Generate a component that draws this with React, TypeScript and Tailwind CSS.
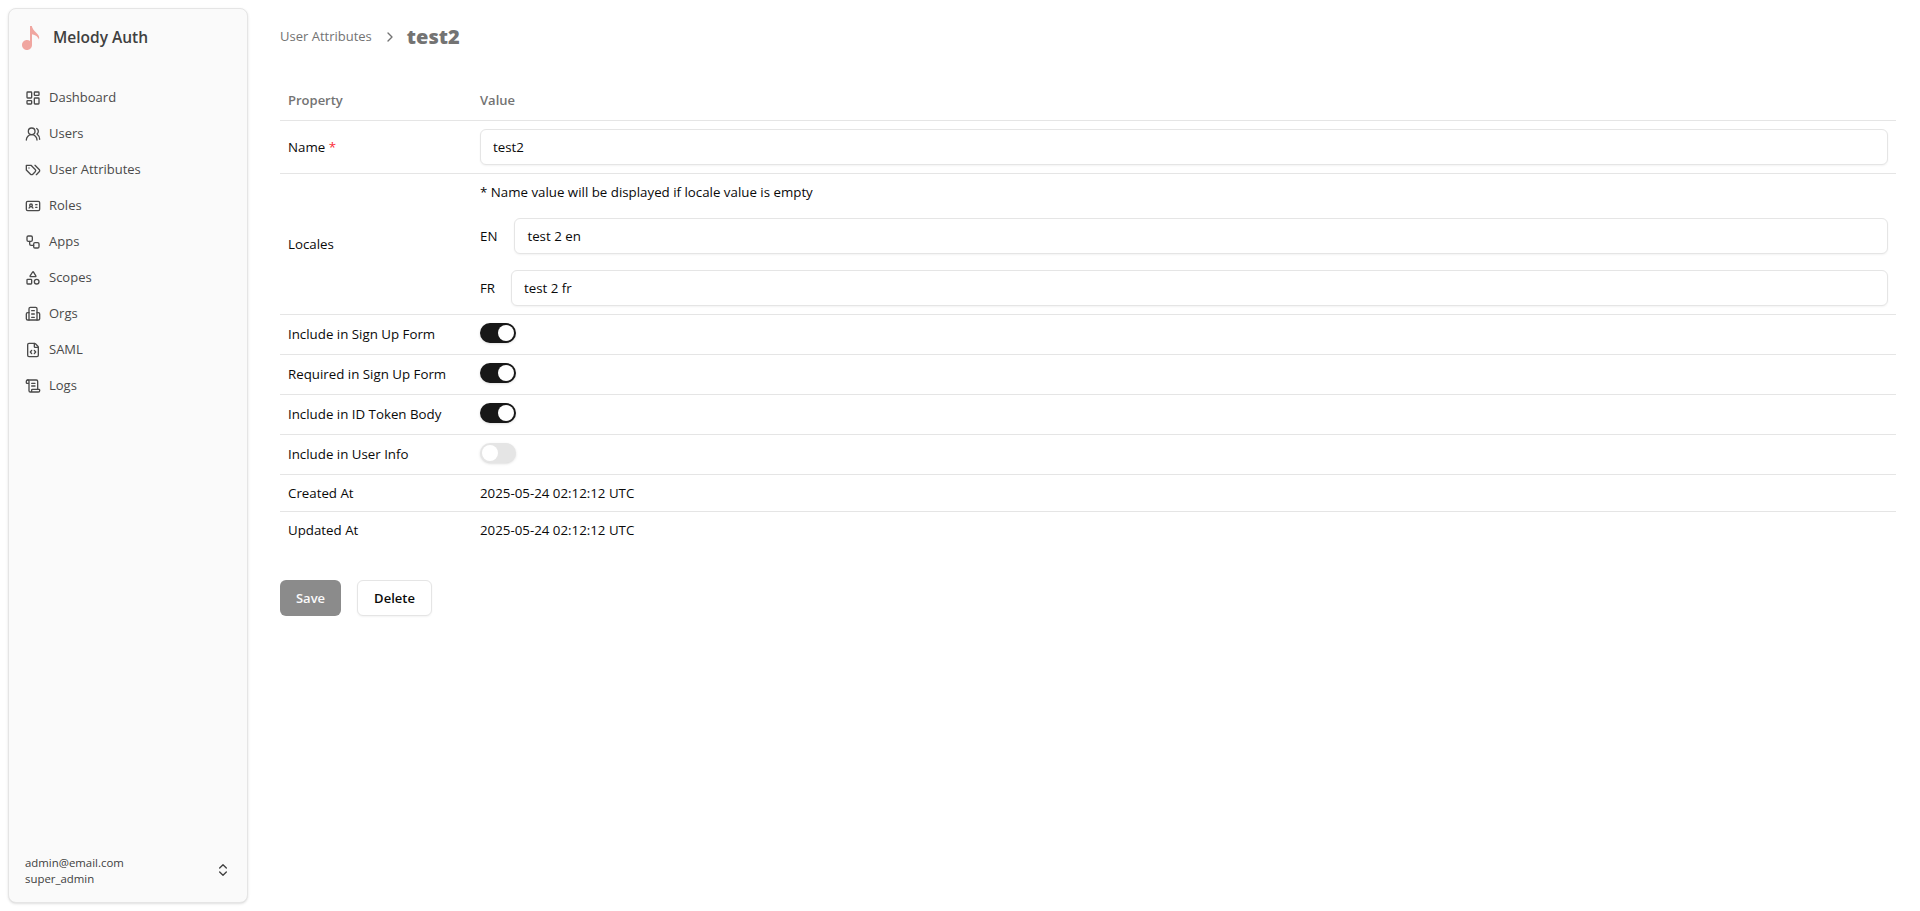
import {
  ChevronRight,
  ChevronsUpDown,
  FileCode,
  IdCard,
  LayoutDashboard,
  ScrollText,
  Shapes,
  UsersRound,
  Workflow,
} from 'lucide-react'
import type { ReactNode } from 'react'

function OrgsIcon({ className }: { className?: string }) {
  return (
    <svg
      viewBox="0 0 24 24"
      fill="none"
      stroke="currentColor"
      strokeWidth="2"
      strokeLinecap="round"
      strokeLinejoin="round"
      className={className}
    >
      <path d="M6 21V4a2 2 0 0 1 2-2h8a2 2 0 0 1 2 2v17" />
      <path d="M6 10H4a2 2 0 0 0-2 2v7a2 2 0 0 0 2 2h16a2 2 0 0 0 2-2v-7a2 2 0 0 0-2-2h-2" />
      <path d="M10 7h4" />
      <path d="M10 12h4" />
      <path d="M10 17h4" />
    </svg>
  )
}

function TagsIcon({ className }: { className?: string }) {
  return (
    <svg
      viewBox="0 0 24 24"
      fill="none"
      stroke="currentColor"
      strokeWidth="2"
      strokeLinecap="round"
      strokeLinejoin="round"
      className={className}
    >
      <path d="M9 5H2v7l6.290 6.290c.94.94 2.480.94 3.420 0l3.580-3.580c.94-.94.94-2.480 0-3.420L9 5Z" />
      <path d="M6 9.010V9" />
      <path d="m15 5 6.300 6.300a2.400 2.400 0 0 1 0 3.400L17 19" />
    </svg>
  )
}

const navItems = [
  { label: 'Dashboard', icon: <LayoutDashboard className="size-4" /> },
  { label: 'Users', icon: <UsersRound className="size-4" /> },
  { label: 'User Attributes', icon: <TagsIcon className="size-4" /> },
  { label: 'Roles', icon: <IdCard className="size-4" /> },
  { label: 'Apps', icon: <Workflow className="size-4" /> },
  { label: 'Scopes', icon: <Shapes className="size-4" /> },
  { label: 'Orgs', icon: <OrgsIcon className="size-4" /> },
  { label: 'SAML', icon: <FileCode className="size-4" /> },
  { label: 'Logs', icon: <ScrollText className="size-4" /> },
]

function Sidebar() {
  return (
    <aside className="h-[911px] w-[256px] shrink-0 p-2">
      <div className="flex h-full flex-col rounded-lg border border-[#e5e5e5] bg-[#fafafa] shadow-sm">
        <div className="mt-[5px] flex h-[47px] items-center gap-[12px] pl-[12px]">
          <svg viewBox="0 0 20 26" className="h-[26px] w-[20px] text-[#f0a6a0]" fill="currentColor">
            <path d="M9 1H10.800C11.300 3.500 13 5.500 15 7.500C17.500 10 18.800 11.500 18 14.500C17 12 14.500 9.800 11 9.300V20C11 22.800 8.800 25 6 25C3.200 25 1 22.800 1 20C1 17.200 3.200 15 6 15C7.200 15 8.200 15.400 9 16Z" />
          </svg>
          <span className="text-[15.500px] font-semibold text-[#404040]">Melody Auth</span>
        </div>
        <nav className="mt-[19px] flex flex-col px-[16px]">
          {navItems.map((item) => (
            <div key={item.label} className="flex h-[36px] items-center gap-[8px] text-[13px] text-[#4a4a4a]">
              {item.icon}
              <span>{item.label}</span>
            </div>
          ))}
        </nav>
        <div className="mt-auto flex items-center justify-between pb-[15px] pl-[16px] pr-[16px]">
          <div className="text-[11.400px] leading-4 text-[#404040]">
            <div>admin@email.com</div>
            <div>super_admin</div>
          </div>
          <ChevronsUpDown className="mb-[2px] size-4 text-[#404040]" />
        </div>
      </div>
    </aside>
  )
}

function Row({ label, children, last }: { label: ReactNode; children: ReactNode; last?: boolean }) {
  return (
    <div className={`flex items-center ${last ? '' : 'border-b border-[#e5e5e5]'}`}>
      <div className="w-[192px] shrink-0 px-2 pt-[1px] text-[13.300px] text-[#0a0a0a]">{label}</div>
      <div className="min-w-0 flex-1 p-2 text-[13.300px] leading-5 text-[#0a0a0a]">{children}</div>
    </div>
  )
}

function TextInput({ value }: { value: string }) {
  return (
    <input
      readOnly
      value={value}
      className="h-9 w-full min-w-0 rounded-md border border-[#e5e5e5] bg-white px-3 text-[13.300px] text-[#0a0a0a] shadow-xs outline-none"
    />
  )
}

function Toggle({ on }: { on?: boolean }) {
  return (
    <div
      className={`mb-[3px] flex h-5 w-9 items-center rounded-full p-0.5 shadow-sm ${
        on ? 'justify-end bg-[#171717]' : 'justify-start bg-[#e5e5e5]'
      }`}
    >
      <div className="size-4 rounded-full bg-white" />
    </div>
  )
}

export default function App() {
  return (
    <div className="flex min-h-[911px] bg-white font-['Open_Sans',sans-serif]">
      <Sidebar />
      <main className="min-w-0 flex-1 px-[24px]">
        <div className="flex h-[74px] items-center gap-[10px]">
          <span className="text-[13px] text-[#737373]">User Attributes</span>
          <ChevronRight className="size-4 text-[#737373]" />
          <h1 className="ml-[-1px] text-[20px] font-extrabold text-[#737373]">test2</h1>
        </div>

        <div className="mt-[6px] flex h-[41px] items-center border-b border-[#e5e5e5] pt-[1px] text-[13px] font-semibold text-[#737373]">
          <div className="w-[192px] px-2">Property</div>
          <div className="px-2">Value</div>
        </div>

        <Row
          label={
            <>
              Name <span className="text-red-500">*</span>
            </>
          }
        >
          <TextInput value="test2" />
        </Row>
        <Row label="Locales">
          <p className="mb-4 h-5">* Name value will be displayed if locale value is empty</p>
          <div className="flex items-center gap-[17px]">
            <span>EN</span>
            <TextInput value="test 2 en" />
          </div>
          <div className="mt-4 flex items-center gap-[16px]">
            <span>FR</span>
            <TextInput value="test 2 fr" />
          </div>
        </Row>
        <Row label="Include in Sign Up Form">
          <Toggle on />
        </Row>
        <Row label="Required in Sign Up Form">
          <Toggle on />
        </Row>
        <Row label="Include in ID Token Body">
          <Toggle on />
        </Row>
        <Row label="Include in User Info">
          <Toggle />
        </Row>
        <Row label="Created At">2025-05-24 02:12:12 UTC</Row>
        <Row label="Updated At" last>
          2025-05-24 02:12:12 UTC
        </Row>

        <div className="mt-[32px] flex gap-[16px]">
          <button className="h-9 w-[61px] rounded-md bg-[#8b8b8b] pt-[1px] text-[13px] font-semibold text-[#fafafa]">Save</button>
          <button className="h-9 w-[75px] rounded-md border border-[#e5e5e5] bg-white pt-[1px] text-[13px] font-semibold text-[#0a0a0a] shadow-xs">
            Delete
          </button>
        </div>
      </main>
    </div>
  )
}
